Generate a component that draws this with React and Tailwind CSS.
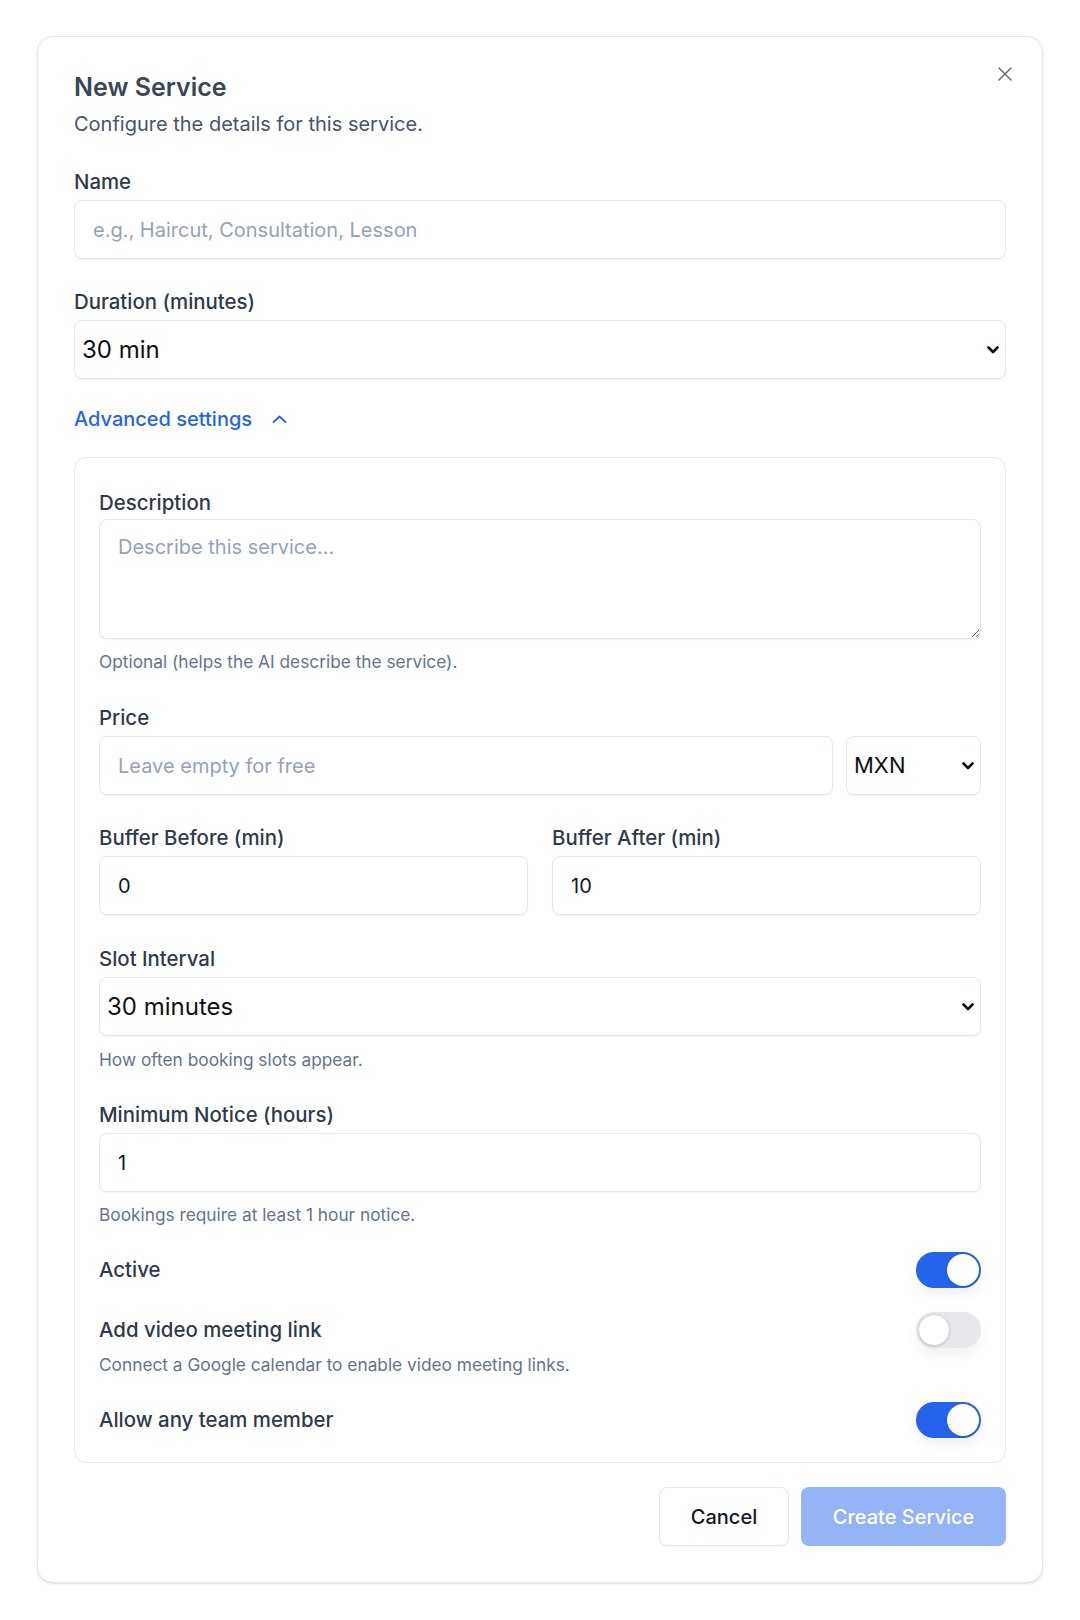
import { useState } from "react";

function Label({ children }) {
  return <label className="block text-[20.4px] font-medium leading-7 text-[#2f3a4a]">{children}</label>;
}

function Help({ children, className = "" }) {
  return <p className={`text-[17.3px] leading-6 text-[#64748b] ${className}`}>{children}</p>;
}

function TextInput({ placeholder, value }) {
  return (
    <input
      type="text"
      placeholder={placeholder}
      defaultValue={value}
      className="mt-1 block h-[59px] w-full rounded-lg border border-[#e2e8f0] bg-white px-[18px] text-xl text-[#111827] shadow-xs outline-none placeholder:text-[#94a3b8]"
    />
  );
}

function Chevron() {
  return (
    <svg width="12" height="8" viewBox="0 0 12 8" className="pointer-events-none absolute right-[7px] top-1/2 -translate-y-1/2">
      <path d="M1.5 1.5 6 6l4.5-4.5" fill="none" stroke="#111322" strokeWidth="2.6" strokeLinecap="round" strokeLinejoin="round" />
    </svg>
  );
}

function Select({ value, options, className = "", textClass = "text-2xl" }) {
  return (
    <div className={`relative mt-1 ${className}`}>
      <select
        defaultValue={value}
        className={`block h-[59px] w-full appearance-none rounded-lg border border-[#e2e8f0] bg-white pl-[7px] pr-8 text-[#111111] shadow-xs outline-none ${textClass}`}
      >
        {options.map((o) => (
          <option key={o}>{o}</option>
        ))}
      </select>
      <Chevron />
    </div>
  );
}

function Toggle({ on }) {
  return (
    <button
      type="button"
      className={`flex h-9 w-[65px] shrink-0 items-center rounded-full p-0.5 shadow-[0_6px_12px_rgba(15,23,42,0.06)] ${
        on ? "justify-end bg-[#2563eb]" : "justify-start bg-[#e5e7eb]"
      }`}
    >
      <span
        className={`block h-8 w-8 rounded-full bg-white shadow-sm ${on ? "" : "border border-[#d1d5db]"}`}
      />
    </button>
  );
}

export default function App() {
  const [open, setOpen] = useState(true);

  return (
    <div className="min-h-screen bg-white px-[37px] pt-9 pb-9 font-[Inter,sans-serif]">
      <div className="relative rounded-2xl border border-[#e5e7eb] bg-white px-9 pt-[34px] pb-9 shadow-sm">
        <button type="button" className="absolute right-[30px] top-[30px] text-[#6b7280]">
          <svg width="14" height="14" viewBox="0 0 14 14">
            <path d="M1 1l12 12M13 1 1 13" stroke="currentColor" strokeWidth="1.6" strokeLinecap="round" />
          </svg>
        </button>

        <h2 className="text-[25px] font-semibold leading-8 text-[#3b4656]">New Service</h2>
        <p className="mt-[7px] text-xl leading-7 text-[#475569]">Configure the details for this service.</p>

        <div className="mt-[30px]">
          <Label>Name</Label>
          <TextInput placeholder="e.g., Haircut, Consultation, Lesson" />
        </div>

        <div className="mt-[29px]">
          <Label>Duration (minutes)</Label>
          <Select value="30 min" options={["15 min", "30 min", "45 min", "60 min", "90 min"]} />
        </div>

        <button
          type="button"
          onClick={() => setOpen(!open)}
          className="mt-[26px] flex items-center gap-5 text-xl font-medium leading-7 text-[#2563eb]"
        >
          Advanced settings
          <svg width="15" height="8" viewBox="0 0 15 8" className={open ? "" : "rotate-180"}>
            <path d="M1.5 7 7.5 1.5 13.5 7" fill="none" stroke="currentColor" strokeWidth="1.8" strokeLinecap="round" strokeLinejoin="round" />
          </svg>
        </button>

        {open && (
          <div className="mt-[24px] rounded-xl border border-[#e5e7eb] px-6 pt-[31px] pb-6">
            <div>
              <Label>Description</Label>
              <textarea
                placeholder="Describe this service..."
                className="mt-[2px] block h-[120px] w-full rounded-lg border border-[#e2e8f0] bg-white px-[18px] py-[13px] text-xl leading-7 text-[#111827] shadow-xs outline-none placeholder:text-[#94a3b8]"
              />
              <Help className="mt-[11px]">Optional (helps the AI describe the service).</Help>
            </div>

            <div className="mt-[30px]">
              <Label>Price</Label>
              <div className="flex items-start gap-[13px]">
                <div className="flex-1">
                  <TextInput placeholder="Leave empty for free" />
                </div>
                <Select value="MXN" options={["MXN", "USD", "EUR"]} className="w-[135px]" textClass="text-[22px]" />
              </div>
            </div>

            <div className="mt-[29px] grid grid-cols-2 gap-6">
              <div>
                <Label>Buffer Before (min)</Label>
                <TextInput value="0" />
              </div>
              <div>
                <Label>Buffer After (min)</Label>
                <TextInput value="10" />
              </div>
            </div>

            <div className="mt-[30px]">
              <Label>Slot Interval</Label>
              <Select value="30 minutes" options={["15 minutes", "30 minutes", "60 minutes"]} />
              <Help className="mt-3">How often booking slots appear.</Help>
            </div>

            <div className="mt-[29px]">
              <Label>Minimum Notice (hours)</Label>
              <TextInput value="1" />
              <Help className="mt-[11px]">Bookings require at least 1 hour notice.</Help>
            </div>

            <div className="mt-[25px] flex items-center justify-between">
              <Label>Active</Label>
              <Toggle on />
            </div>

            <div className="mt-6">
              <div className="flex items-center justify-between">
                <Label>Add video meeting link</Label>
                <Toggle on={false} />
              </div>
              <Help className="mt-[5px]">Connect a Google calendar to enable video meeting links.</Help>
            </div>

            <div className="mt-[25px] flex items-center justify-between">
              <Label>Allow any team member</Label>
              <Toggle on />
            </div>
          </div>
        )}

        <div className="mt-[24px] flex justify-end gap-3">
          <button
            type="button"
            className="h-[59px] w-[130px] rounded-lg border border-[#e2e8f0] bg-white text-xl font-medium text-[#111827] shadow-xs"
          >
            Cancel
          </button>
          <button
            type="button"
            disabled
            className="h-[59px] w-[205px] rounded-lg bg-[#93b4f5] text-xl font-medium text-white"
          >
            Create Service
          </button>
        </div>
      </div>
    </div>
  );
}
